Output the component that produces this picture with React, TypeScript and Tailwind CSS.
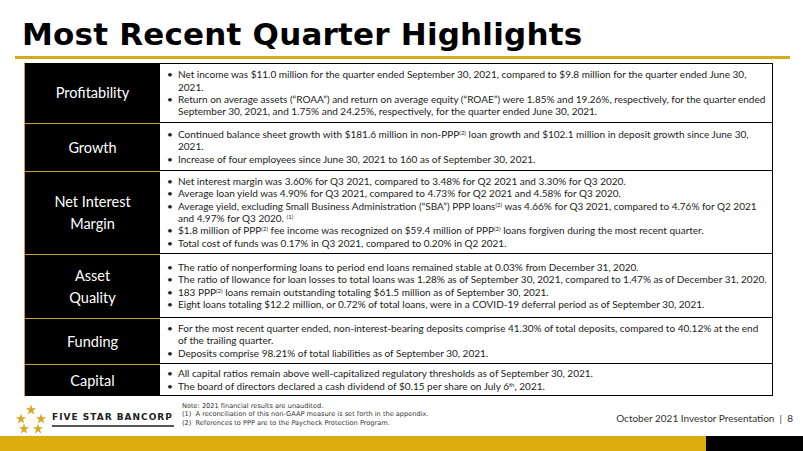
import React from "react";

type Row = { label: string[]; h: string; items: React.ReactNode[] };

const Sup = ({ children }: { children: React.ReactNode }) => (
  <sup className="text-[6px] leading-[0] relative -top-[3px] align-baseline">{children}</sup>
);

// line breaks follow the slide's own wrapping
const rows: Row[] = [
  {
    label: ["Profitability"],
    h: "h-[60px]",
    items: [
      <>
        Net income was $11.0 million for the quarter ended September 30, 2021, compared to $9.8 million for the quarter ended June 30,
        <br />
        2021.
      </>,
      <>
        Return on average assets (“ROAA”) and return on average equity (“ROAE”) were 1.85% and 19.26%, respectively, for the quarter ended
        <br />
        September 30, 2021, and 1.75% and 24.25%, respectively, for the quarter ended June 30, 2021.
      </>,
    ],
  },
  {
    label: ["Growth"],
    h: "h-[48px]",
    items: [
      <>
        Continued balance sheet growth with $181.6 million in non-PPP<Sup>(2)</Sup> loan growth and $102.1 million in deposit growth since June 30,
        <br />
        2021.
      </>,
      "Increase of four employees since June 30, 2021 to 160 as of September 30, 2021.",
    ],
  },
  {
    label: ["Net Interest", "Margin"],
    h: "h-[83px]",
    items: [
      "Net interest margin was 3.60% for Q3 2021, compared to 3.48% for Q2 2021 and 3.30% for Q3 2020.",
      "Average loan yield was 4.90% for Q3 2021, compared to 4.73% for Q2 2021 and 4.58% for Q3 2020.",
      <>
        Average yield, excluding Small Business Administration (“SBA”) PPP loans<Sup>(2)</Sup> was 4.66% for Q3 2021, compared to 4.76% for Q2 2021
        <br />
        and 4.97% for Q3 2020. <Sup>(1)</Sup>
      </>,
      <>
        $1.8 million of PPP<Sup>(2)</Sup> fee income was recognized on $59.4 million of PPP<Sup>(2)</Sup> loans forgiven during the most recent quarter.
      </>,
      "Total cost of funds was 0.17% in Q3 2021, compared to 0.20% in Q2 2021.",
    ],
  },
  {
    label: ["Asset", "Quality"],
    h: "h-[64px]",
    items: [
      "The ratio of nonperforming loans to period end loans remained stable at 0.03% from December 31, 2020.",
      "The ratio of llowance for loan losses to total loans was 1.28% as of September 30, 2021, compared to 1.47% as of December 31, 2020.",
      <>
        183 PPP<Sup>(2)</Sup> loans remain outstanding totaling $61.5 million as of September 30, 2021.
      </>,
      "Eight loans totaling $12.2 million, or 0.72% of total loans, were in a COVID-19 deferral period as of September 30, 2021.",
    ],
  },
  {
    label: ["Funding"],
    h: "h-[46px]",
    items: [
      <>
        For the most recent quarter ended, non-interest-bearing deposits comprise 41.30% of total deposits, compared to 40.12% at the end
        <br />
        of the trailing quarter.
      </>,
      "Deposits comprise 98.21% of total liabilities as of September 30, 2021.",
    ],
  },
  {
    label: ["Capital"],
    h: "h-[32px]",
    items: [
      "All capital ratios remain above well-capitalized regulatory thresholds as of September 30, 2021.",
      <>
        The board of directors declared a cash dividend of $0.15 per share on July 6<Sup>th</Sup>, 2021.
      </>,
    ],
  },
];

const Star = ({ x, y }: { x: number; y: number }) => (
  <polygon
    transform={`translate(${x} ${y})`}
    points="0,-5.5 1.3,-1.7 5.2,-1.7 2,0.6 3.2,4.5 0,2.2 -3.2,4.5 -2,0.6 -5.2,-1.7 -1.3,-1.7"
    fill="#d9a821"
  />
);

export default function App() {
  return (
    <div className="w-[803px] h-[451px] bg-white flex flex-col overflow-hidden">
      <h1 className="pl-[22px] pt-[16px] h-[58px] text-[31px] leading-[36px] font-bold text-black font-['DejaVu_Sans',sans-serif] tracking-[0.2px]">
        Most Recent Quarter Highlights
      </h1>
      <div className="ml-[15px] w-[775px] h-[3px] bg-[#d4aa1e]" />
      <div className="ml-[24px] mt-[4px] w-[749px] flex flex-col font-['Lato',sans-serif]">
        {rows.map((r, i) => (
          <div key={i} className={`flex ${r.h}`}>
            <div
              className={`w-[136px] shrink-0 bg-black flex flex-col items-center justify-center text-white text-[14.5px] leading-[22px] border-l border-[#c9a227] ${
                i > 0 ? "border-t" : ""
              }`}
            >
              {r.label.map((l) => (
                <span key={l}>{l}</span>
              ))}
            </div>
            <div
              className={`flex-1 border-r border-b border-black flex flex-col justify-center pl-[7px] pr-[2px] text-[10px] leading-[12.4px] text-[#222] ${
                i === 0 ? "border-t" : ""
              }`}
            >
              {r.items.map((it, j) => (
                <div key={j} className="flex">
                  <span className="w-[11px] shrink-0">•</span>
                  <span>{it}</span>
                </div>
              ))}
            </div>
          </div>
        ))}
      </div>
      <div className="flex-1 flex items-start pt-[6px]">
        <svg width="50" height="34" viewBox="0 0 50 34" className="ml-[14px] shrink-0">
          <Star x={17} y={8} />
          <Star x={7} y={17} />
          <Star x={27} y={17} />
          <Star x={10} y={27} />
          <Star x={24} y={27} />
        </svg>
        <div className="flex flex-col pt-[10px] -ml-[12px] shrink-0">
          <span className="text-[9px] font-bold tracking-[1px] leading-[11px] text-[#222] font-['DejaVu_Sans',sans-serif]">
            FIVE STAR BANCORP
          </span>
          <div className="h-[2px] bg-[#555] mt-[2px] w-[122px]" />
        </div>
        <div className="ml-[8px] flex flex-col text-[6.6px] leading-[8.3px] text-[#333] font-['DejaVu_Sans',sans-serif]">
          <span>Note: 2021 financial results are unaudited.</span>
          <span>(1)&nbsp;&nbsp;A reconciliation of this non-GAAP measure is set forth in the appendix.</span>
          <span>(2)&nbsp;&nbsp;References to PPP are to the Paycheck Protection Program.</span>
        </div>
        <div className="ml-auto mr-[10px] pt-[9px] text-[10px] text-[#333] font-['Lato',sans-serif] whitespace-pre">
          October 2021 Investor Presentation  |  8
        </div>
      </div>
      <div className="flex h-[15px] shrink-0">
        <div className="w-[706px] bg-[#dcad0e]" />
        <div className="flex-1 bg-black" />
      </div>
    </div>
  );
}
